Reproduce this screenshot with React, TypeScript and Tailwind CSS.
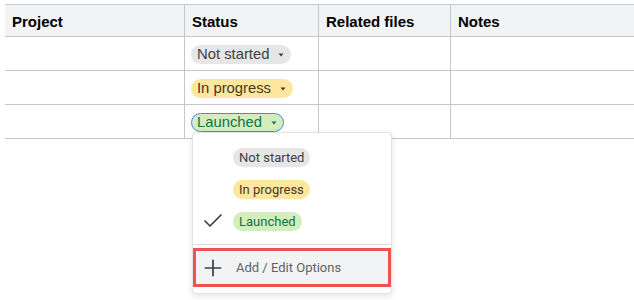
import { Check, Plus } from "lucide-react";

type Chip = { label: string; bg: string; text: string };

const chips: Chip[] = [
  { label: "Not started", bg: "bg-[#e6e6e6]", text: "text-[#3c4043]" },
  { label: "In progress", bg: "bg-[#fde69d]", text: "text-[#473821]" },
  { label: "Launched", bg: "bg-[#d4edbc]", text: "text-[#11734b]" },
];

function Caret() {
  return (
    <svg width="6" height="4" viewBox="0 0 6 4" className="ml-[9px] mt-[1px]">
      <path d="M0.5 0.5h5L3 3.5z" fill="currentColor" />
    </svg>
  );
}

function TableChip({ chip, active }: { chip: Chip; active?: boolean }) {
  return (
    <span
      className={`inline-flex h-[19px] items-center rounded-full pl-[5px] pr-[6px] text-[14.8px] leading-none ${chip.bg} ${chip.text} ${
        active ? "border border-[#4a86e8]" : "border border-transparent"
      }`}
    >
      {chip.label}
      <Caret />
    </span>
  );
}

const headers = ["Project", "Status", "Related files", "Notes"];
const cols = "grid grid-cols-[179px_134px_132px_1fr]";

export default function App() {
  return (
    <div className="relative h-[300px] w-[634px] overflow-hidden bg-white font-['Liberation_Sans',Arial,sans-serif]">
      <div className="pl-[5px] pt-[4px]">
        <div className={`${cols} h-[33px] border-y border-[#c6c7cc] bg-[#f1f3f4]`}>
          {headers.map((h, i) => (
            <div
              key={h}
              className={`flex items-center px-[7px] pt-[3px] text-[15px] font-bold text-black ${i > 0 ? "border-l border-[#c6c7cc]" : ""}`}
            >
              {h}
            </div>
          ))}
        </div>
        {chips.map((chip, r) => (
          <div key={chip.label} className={`${cols} h-[34px] border-b border-[#c6c7cc]`}>
            <div />
            <div className="flex items-center border-l border-[#c6c7cc] pl-[6px] pt-[1px]">
              <TableChip chip={chip} active={r === 2} />
            </div>
            <div className="border-l border-[#c6c7cc]" />
            <div className="border-l border-[#c6c7cc]" />
          </div>
        ))}
      </div>

      <div className="absolute left-[192px] top-[132px] w-[200px] rounded-[4px] border border-[#e3e3e3] bg-white pb-[6px] pt-[8px] font-['Roboto',sans-serif] shadow-[0_2px_6px_rgba(60,64,67,0.15)]">
        {chips.map((chip, i) => (
          <div key={chip.label} className="flex h-[32px] items-center">
            <div className="flex w-[40px] justify-center">
              {i === 2 && <Check size={24} strokeWidth={1.7} className="text-[#3c4043]" />}
            </div>
            <span className={`rounded-full px-[6px] py-[2px] text-[13px] leading-[15px] ${chip.bg} ${chip.text}`}>
              {chip.label}
            </span>
          </div>
        ))}
        <div className="mt-[7px] border-t border-[#dadce0]" />
        <div className="mt-[3px] flex h-[39px] items-center border-[3px] border-[#ef5350] bg-[#f1f3f4]">
          <Plus size={26} strokeWidth={1.6} className="ml-[4px] text-[#3c4043]" />
          <span className="ml-[10px] text-[13px] text-[#5f6368]">Add / Edit Options</span>
        </div>
      </div>
    </div>
  );
}
